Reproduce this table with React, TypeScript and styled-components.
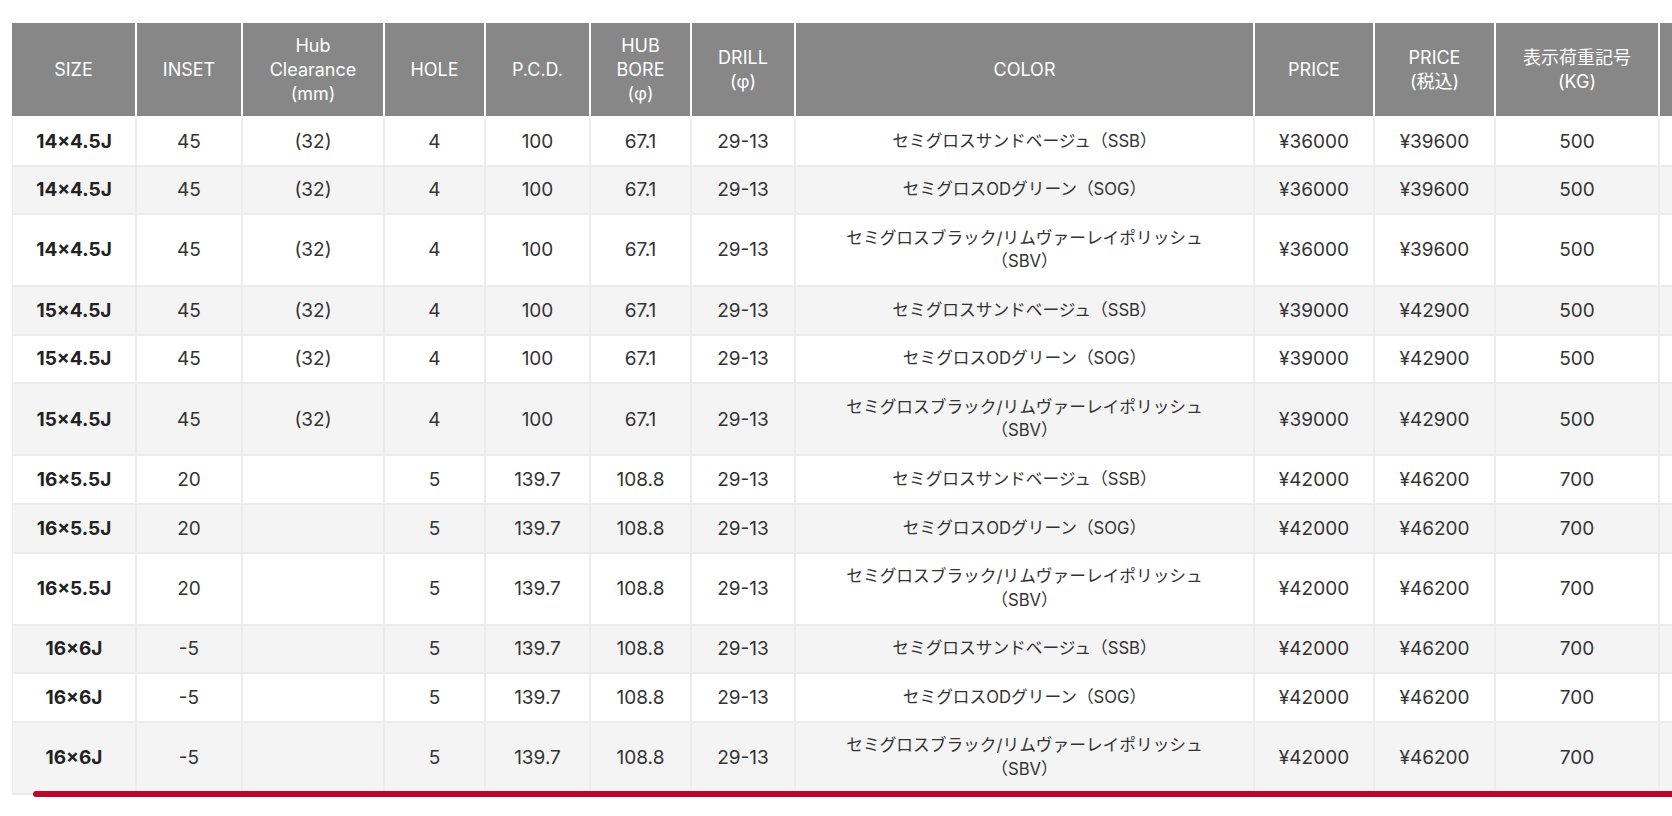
import styled, { createGlobalStyle } from 'styled-components'

const GlobalStyle = createGlobalStyle`
    html, body {
        margin: 0;
        padding: 0;
        background: #ffffff;
    }
    body {
        font-family: Inter, "Noto Sans CJK JP", sans-serif;
        color: #333333;
        overflow: hidden;
    }
`

const Page = styled.div`
    width: 100vw;
    height: 816px;
    overflow: hidden;
    padding: 23px 0 0 12px;
    box-sizing: border-box;
`

const ScrollArea = styled.div`
    position: relative;
    width: max-content;
`

const Thumb = styled.div`
    position: absolute;
    left: 21px;
    right: -40px;
    bottom: -2px;
    height: 6px;
    border-radius: 3px;
    background: #b9082b;
`

const Table = styled.table`
    border-collapse: separate;
    border-spacing: 0;
    table-layout: fixed;
    width: 1768px;
    font-size: 19px;
    line-height: 23.4px;
`

const HeadCell = styled.th`
    background: #878787;
    color: #ffffff;
    font-size: 18px;
    line-height: 24px;
    font-weight: 400;
    text-align: center;
    vertical-align: middle;
    padding: 10.5px 6px;
    border-right: 2px solid #ffffff;
    border-bottom: 2px solid #ffffff;
    box-sizing: border-box;
`

const Row = styled.tr`
    background: #ffffff;

    &:nth-child(even) {
        background: #f4f4f4;
    }
`

const Cell = styled.td<{ $bold?: boolean; $kana?: boolean }>`
    text-align: center;
    vertical-align: middle;
    padding: 11.6px 6px;
    border-right: 2px solid #ececec;
    border-bottom: 2px solid #ececec;
    font-size: ${({ $kana }) => ($kana ? '16.7px' : '19px')};
    font-weight: ${({ $bold }) => ($bold ? 700 : 400)};
    color: ${({ $bold }) => ($bold ? '#222222' : '#333333')};
    box-sizing: border-box;

    &:first-child {
        border-left: 1px solid #ececec;
    }
`

const widths = [125, 106, 142, 101, 105, 101, 104, 459, 120, 121, 164, 120]

const headers: string[][] = [
    ['SIZE'],
    ['INSET'],
    ['Hub', 'Clearance', '(mm)'],
    ['HOLE'],
    ['P.C.D.'],
    ['HUB', 'BORE', '(φ)'],
    ['DRILL', '(φ)'],
    ['COLOR'],
    ['PRICE'],
    ['PRICE', '(税込)'],
    ['表示荷重記号', '(KG)'],
    [''],
]

const colors = [
    ['セミグロスサンドベージュ（SSB）'],
    ['セミグロスODグリーン（SOG）'],
    ['セミグロスブラック/リムヴァーレイポリッシュ', '（SBV）'],
]

type Spec = {
    size: string
    inset: string
    hub: string
    hole: string
    pcd: string
    bore: string
    price: string
    taxed: string
    load: string
}

const specs: Spec[] = [
    { size: '14×4.5J', inset: '45', hub: '(32)', hole: '4', pcd: '100', bore: '67.1', price: '¥36000', taxed: '¥39600', load: '500' },
    { size: '15×4.5J', inset: '45', hub: '(32)', hole: '4', pcd: '100', bore: '67.1', price: '¥39000', taxed: '¥42900', load: '500' },
    { size: '16×5.5J', inset: '20', hub: '', hole: '5', pcd: '139.7', bore: '108.8', price: '¥42000', taxed: '¥46200', load: '700' },
    { size: '16×6J', inset: '-5', hub: '', hole: '5', pcd: '139.7', bore: '108.8', price: '¥42000', taxed: '¥46200', load: '700' },
]

const rows = specs.flatMap((spec) => colors.map((color) => ({ ...spec, color })))

const Lines = ({ lines }: { lines: string[] }) => (
    <>
        {lines.map((line, i) => (
            <span key={i}>
                {i > 0 && <br />}
                {line}
            </span>
        ))}
    </>
)

export default function App() {
    return (
        <>
            <GlobalStyle />
            <Page>
                <ScrollArea>
                    <Table>
                        <colgroup>
                            {widths.map((w, i) => (
                                <col key={i} style={{ width: w }} />
                            ))}
                        </colgroup>
                        <thead>
                            <tr>
                                {headers.map((lines, i) => (
                                    <HeadCell key={i}>
                                        <Lines lines={lines} />
                                    </HeadCell>
                                ))}
                            </tr>
                        </thead>
                        <tbody>
                            {rows.map((row, i) => (
                                <Row key={i}>
                                    <Cell $bold>{row.size}</Cell>
                                    <Cell>{row.inset}</Cell>
                                    <Cell>{row.hub}</Cell>
                                    <Cell>{row.hole}</Cell>
                                    <Cell>{row.pcd}</Cell>
                                    <Cell>{row.bore}</Cell>
                                    <Cell>29-13</Cell>
                                    <Cell $kana>
                                        <Lines lines={row.color} />
                                    </Cell>
                                    <Cell>{row.price}</Cell>
                                    <Cell>{row.taxed}</Cell>
                                    <Cell>{row.load}</Cell>
                                    <Cell />
                                </Row>
                            ))}
                        </tbody>
                    </Table>
                    <Thumb />
                </ScrollArea>
            </Page>
        </>
    )
}
